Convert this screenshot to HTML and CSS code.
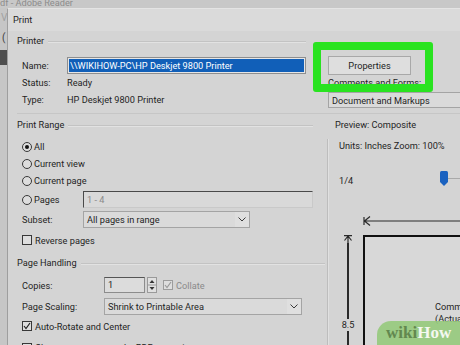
FILE: index.html
```html
<!DOCTYPE html>
<html lang="en">
<head>
  <meta charset="UTF-8">
  <title>Print</title>
  <link rel="stylesheet" href="styles.css">
</head>
<body>
  <div class="app">
    <!-- Reader window behind the dialog -->
    <div class="app-title"><span>df - Adobe Reader</span></div>

    <div class="app-main">
      <div class="app-side">
        <span class="side-glyph">V</span>
        <span class="side-glyph paren">(</span>
        <div class="side-dark"></div>
      </div>

      <!-- Print dialog -->
      <div class="dialog">
        <div class="dialog-title">Print</div>

        <div class="dialog-body">
          <section class="printer">
            <div class="printer-main">
              <div class="group-label">Printer</div>
              <div class="fields">
                <span>Name:</span>
                <div class="name-input"><span>\\WIKIHOW-PC\HP Deskjet 9800 Printer</span></div>
                <span>Status:</span>
                <span>Ready</span>
                <span>Type:</span>
                <span>HP Deskjet 9800 Printer</span>
              </div>
            </div>
            <div class="printer-side">
              <div class="btn">Properties</div>
              <div class="side-label">Comments and Forms:</div>
              <div class="select select-wide"><span>Document and Markups</span></div>
            </div>
          </section>

          <div class="columns">
            <div class="col-left">
              <div class="group-label range-label">Print Range</div>
              <div class="group-body range-body">
                <div class="opt"><span class="radio on"></span>All</div>
                <div class="opt"><span class="radio"></span>Current view</div>
                <div class="opt"><span class="radio"></span>Current page</div>
                <div class="field-row pages-row">
                  <div class="opt"><span class="radio"></span>Pages</div>
                  <div class="pages-input">1 - 4</div>
                </div>
                <div class="field-row subset-row">
                  <span>Subset:</span>
                  <div class="select subset-select">
                    <span>All pages in range</span>
                    <span class="chev"><svg width="8" height="5" viewBox="0 0 8 5"><path d="M0.5 0.5 L4 4 L7.5 0.5" fill="none" stroke="#3a3a3a"/></svg></span>
                  </div>
                </div>
                <div class="opt check-row reverse-row"><span class="checkbox"></span>Reverse pages</div>
              </div>

              <div class="group-label handling-label">Page Handling</div>
              <div class="group-body handling-body">
                <div class="field-row wide copies-row">
                  <span>Copies:</span>
                  <div class="copies">
                    <div class="copies-input">1</div>
                    <div class="spinner">
                      <svg width="10" height="16" viewBox="0 0 10 16">
                        <path d="M2.5 6 L5 3 L7.5 6 Z" fill="#333"/>
                        <path d="M0 8 H10" stroke="#9a9a9a"/>
                        <path d="M2.5 10 L5 13 L7.5 10 Z" fill="#333"/>
                      </svg>
                    </div>
                    <span class="checkbox disabled checked">
                      <svg width="8" height="8" viewBox="0 0 8 8"><path d="M1 4 L3 6.5 L7 1" fill="none" stroke="#9a9a9a" stroke-width="1.2"/></svg>
                    </span>
                    <span class="muted">Collate</span>
                  </div>
                </div>
                <div class="field-row wide scaling-row">
                  <span>Page Scaling:</span>
                  <div class="select scaling-select">
                    <span>Shrink to Printable Area</span>
                    <span class="chev"><svg width="8" height="5" viewBox="0 0 8 5"><path d="M0.5 0.5 L4 4 L7.5 0.5" fill="none" stroke="#3a3a3a"/></svg></span>
                  </div>
                </div>
                <div class="opt check-row rotate-row">
                  <span class="checkbox checked">
                    <svg width="8" height="8" viewBox="0 0 8 8"><path d="M1 4 L3 6.5 L7 1" fill="none" stroke="#222" stroke-width="1.2"/></svg>
                  </span>
                  Auto-Rotate and Center
                </div>
                <div class="opt check-row paper-row"><span class="checkbox"></span>Choose paper source by PDF page size</div>
              </div>
            </div>

            <div class="preview">
              <div class="group-label preview-label">Preview: Composite</div>
              <div class="preview-body">
                <div class="units">Units: Inches Zoom: 100%</div>
                <div class="pager">
                  <span class="pager-num">1/4</span>
                  <svg class="thumb" width="8" height="15" viewBox="0 0 8 15"><path d="M0 1.5 Q0 0 1.5 0 H6.5 Q8 0 8 1.5 V11 L4 15 L0 11 Z" fill="#1a62c0"/></svg>
                  <span class="track"></span>
                </div>
                <div class="hruler">
                  <svg width="110" height="14" viewBox="0 0 110 14">
                    <path d="M1 3 V11 M1.5 7 L7 2.5 M1.5 7 L7 11.5 M1.5 7 H110" fill="none" stroke="#2a2a2a" stroke-width="1.2"/>
                  </svg>
                </div>
                <div class="sheet-row">
                  <div class="vruler">
                    <svg width="10" height="8" viewBox="0 0 10 8">
                      <path d="M1 0.6 H9 M5 1 L1.5 5.5 M5 1 L8.5 5.5 M5 1 V8" fill="none" stroke="#2a2a2a" stroke-width="1.2"/>
                    </svg>
                    <span class="vline top"></span>
                    <span class="vlabel">8.5</span>
                    <span class="vline"></span>
                  </div>
                  <div class="sheet">
                    <div class="sheet-margin"></div>
                    <div class="sheet-page">
                      <span>Comments</span>
                      <span>(Actual Size)</span>
                    </div>
                  </div>
                </div>
              </div>
            </div>
          </div>
        </div>
      </div>
    </div>

    <!-- Highlight drawn over the Properties button -->
    <div class="highlight"></div>

    <div class="watermark"><span class="wm-wiki">wiki</span><span class="wm-how">How</span></div>
  </div>
</body>
</html>
```

FILE: styles.css
```css
* {
  box-sizing: border-box;
}

body {
  margin: 0;
  font-family: Roboto, 'Liberation Sans', sans-serif;
  font-size: 9.2px;
  color: #1f1f1f;
}

.app {
  position: relative;
  width: 460px;
  height: 345px;
  overflow: hidden;
  background: #c8c8c8;
}

/* Window behind */
.app-title {
  height: 8px;
  overflow: hidden;
  color: #8c8c8c;
  white-space: nowrap;
}

.app-title span {
  display: block;
  margin-top: -3px;
  line-height: 12px;
}

.app-main {
  display: flex;
  height: 337px;
}

.app-side {
  width: 7px;
  flex: none;
  display: flex;
  flex-direction: column;
  overflow: hidden;
  background: #c6c6c6;
}

.side-glyph {
  height: 20px;
  line-height: 20px;
  padding-left: 1px;
  color: #a0a0a0;
  font-size: 10px;
}

.side-glyph.paren {
  height: 22px;
  color: #3c3c3c;
  padding-left: 2px;
}

.side-dark {
  height: 15px;
  background: #4e4e4e;
}

/* Dialog */
.dialog {
  flex: 1;
  display: flex;
  flex-direction: column;
  background: #d6d6d6;
  border-left: 1px solid #9e9e9e;
  border-top: 1px solid #e4e4e4;
}

.dialog-title {
  height: 22px;
  line-height: 22px;
  padding-left: 5px;
  background: #dadada;
}

.dialog-body {
  flex: 1;
  padding-left: 9px;
  background: #d4d4d4;
}

.group-label {
  display: flex;
  align-items: center;
  gap: 4px;
  height: 14px;
  line-height: 14px;
  white-space: nowrap;
}

.group-label::after {
  content: '';
  flex: 1;
  height: 1px;
  background: #c3c3c3;
  box-shadow: 0 1px 0 #e2e2e2;
}

.group-body {
  padding-left: 5px;
}

/* Printer */
.printer {
  display: flex;
  height: 83px;
  border-bottom: 1px solid #c6c6c6;
}

.printer-main {
  width: 289px;
  flex: none;
  padding-top: 3px;
}

.fields {
  display: grid;
  grid-template-columns: 45px 1fr;
  grid-auto-rows: 17px;
  align-items: center;
  margin-top: 9px;
  padding-left: 5px;
  white-space: nowrap;
}

.name-input {
  height: 17px;
  padding: 1px;
  border: 1px solid #8e8e8e;
  background: #e6e6e6;
}

.name-input span {
  display: block;
  height: 13px;
  line-height: 13px;
  padding-left: 1px;
  color: #fff;
  background: #115fb8;
}

.printer-side {
  flex: none;
  margin-left: 22px;
  padding-top: 25px;
  white-space: nowrap;
}

.btn {
  width: 83px;
  height: 19px;
  line-height: 17px;
  text-align: center;
  border: 1px solid #a8a8a8;
  background: #dedede;
}

.side-label {
  height: 16px;
  line-height: 16px;
}

.select {
  display: flex;
  align-items: center;
  height: 17px;
  padding-left: 3px;
  border: 1px solid #a4a4a4;
  background: #dadada;
  white-space: nowrap;
}

.select .chev {
  display: flex;
  align-items: center;
  justify-content: center;
  width: 14px;
  align-self: stretch;
  margin-left: auto;
  background: #dfdfdf;
}

.select-wide {
  width: 140px;
  height: 16px;
  margin-top: 1px;
}

/* Lower columns */
.columns {
  display: flex;
  height: 231px;
}

.col-left {
  width: 310px;
  flex: none;
  padding-top: 4px;
}

.range-label::after {
  margin-right: 14px;
}

.range-body {
  margin-top: 6px;
}

.opt {
  display: flex;
  align-items: center;
  gap: 2px;
  height: 17px;
  white-space: nowrap;
}

.radio {
  position: relative;
  width: 10px;
  height: 10px;
  border: 1px solid #383838;
  border-radius: 50%;
  background: #dddddd;
}

.radio.on::after {
  content: '';
  position: absolute;
  top: 2px;
  left: 2px;
  width: 4px;
  height: 4px;
  border-radius: 50%;
  background: #111;
}

.checkbox {
  display: flex;
  align-items: center;
  justify-content: center;
  width: 10px;
  height: 10px;
  margin-right: 1px;
  border: 1px solid #383838;
  background: #dedede;
}

.checkbox.disabled {
  border-color: #9c9c9c;
}

.field-row {
  display: grid;
  grid-template-columns: 61px auto;
  align-items: center;
  height: 17px;
  white-space: nowrap;
}

.field-row.wide {
  grid-template-columns: 82px auto;
}

.pages-row {
  margin-top: 2px;
}

.pages-input {
  width: 230px;
  height: 17px;
  line-height: 15px;
  padding-left: 3px;
  color: #8a8a8a;
  background: #d9d9d9;
  border: 1px solid #c9c9c9;
  border-top-color: #4a4a4a;
  border-left-color: #4a4a4a;
}

.subset-row {
  margin-top: 3px;
}

.subset-select {
  width: 167px;
}

.reverse-row {
  height: 18px;
  margin-top: 3px;
}

.handling-label {
  margin-top: 7px;
}

.handling-label::after {
  margin-right: 2px;
}

.handling-body {
  padding-top: 7px;
}

.copies-row {
  height: 16px;
}

.copies {
  display: flex;
  align-items: center;
}

.copies-input {
  width: 41px;
  height: 16px;
  line-height: 14px;
  padding-left: 3px;
  border: 1px solid #8c8c8c;
  border-top-color: #555;
  background: #dcdcdc;
}

.spinner {
  display: flex;
  width: 10px;
  height: 16px;
  margin-left: 2px;
  margin-right: 6px;
  outline: 1px solid #9a9a9a;
  outline-offset: -1px;
  background: #e0e0e0;
}

.muted {
  margin-left: 2px;
  color: #8a8a8a;
}

.scaling-row {
  margin-top: 5px;
}

.scaling-select {
  width: 198px;
}

.rotate-row {
  height: 16px;
  margin-top: 3px;
}

.paper-row {
  margin-top: 5px;
}

/* Preview */
.preview {
  flex: none;
  width: 160px;
  padding-top: 4px;
}

.preview-label {
  padding-left: 8px;
}

.preview-label::after {
  display: none;
}

.preview-body {
  height: 220px;
  padding-left: 11px;
  border-left: 1px solid #bdbdbd;
  box-shadow: inset 1px 0 0 #e0e0e0;
}

.units {
  height: 14px;
  line-height: 14px;
  margin-top: 7px;
  white-space: nowrap;
}

.pager {
  display: flex;
  align-items: center;
  height: 16px;
  margin-top: 19px;
}

.pager-num {
  width: 101px;
  flex: none;
}

.thumb {
  flex: none;
  margin-top: -4px;
}

.track {
  flex: 1;
  height: 1px;
  margin-top: -4px;
  background: #a9a9a9;
}

.hruler {
  display: flex;
  height: 14px;
  margin-top: 26px;
  padding-left: 24px;
}

.sheet-row {
  display: flex;
  margin-top: 7px;
}

.vruler {
  display: flex;
  flex-direction: column;
  align-items: center;
  width: 18px;
  height: 120px;
  margin-right: 6px;
}

.vline {
  width: 1.2px;
  flex: 1;
  background: #2a2a2a;
}

.vline.top {
  flex: none;
  height: 76px;
}

.vlabel {
  height: 12px;
  line-height: 12px;
}

.sheet {
  display: flex;
  width: 120px;
  height: 120px;
  padding-top: 3px;
  border: 2px solid #111;
  background: #dadada;
}

.sheet-margin {
  width: 13px;
  background: #b5b5b5;
}

.sheet-page {
  flex: 1;
  display: flex;
  flex-direction: column;
  padding-top: 61px;
  padding-left: 70px;
  line-height: 12px;
  white-space: nowrap;
  background: #d8d8d8;
}

/* Overlays */
.highlight {
  position: absolute;
  left: 313px;
  top: 42px;
  width: 120px;
  height: 50px;
  border: 8px solid #29e320;
  border-radius: 3px;
}

.watermark {
  position: absolute;
  right: 0;
  bottom: 0;
  width: 83px;
  height: 24px;
  padding-left: 9px;
  padding-top: 2px;
  border-top-left-radius: 14px;
  background: rgba(150, 202, 124, 0.9);
  font-family: 'Liberation Serif', serif;
  font-weight: bold;
  font-size: 17px;
  line-height: 20px;
  white-space: nowrap;
}

.wm-wiki {
  color: #62884f;
}

.wm-how {
  color: #f4f8f0;
}
```
